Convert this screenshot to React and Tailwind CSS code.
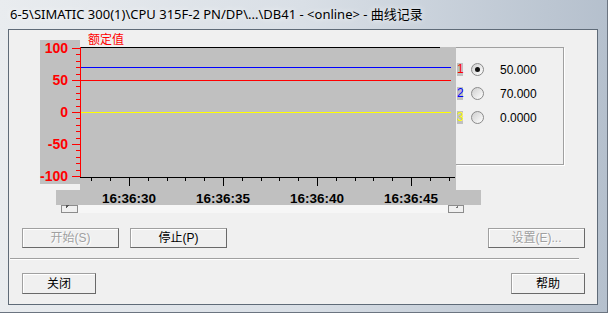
import React from 'react';

const yTicks = [];
for (let v = -100; v <= 100; v += 10) yTicks.push(v);
const xTicks = [];
for (let k = -2; k <= 17; k++) xTicks.push(k);
const xLabels = ['16:36:30', '16:36:35', '16:36:40', '16:36:45'];

function Chart() {
  const row = (v) => Math.round(81 - v * 0.64) + 0.5;
  return (
    <svg width="416" height="182" className="block shrink-0 overflow-visible" shapeRendering="crispEdges">
      <text x="48" y="13" fill="#ff0000" fontSize="12" fontFamily='"Noto Sans CJK SC", sans-serif'>额定值</text>
      {/* panels */}
      <rect x="0" y="9" width="40" height="144" fill="#c0c0c0" />
      <rect x="40" y="16" width="376" height="143" fill="#c0c0c0" />
      <rect x="16" y="159" width="425" height="15" fill="#c0c0c0" />
      {/* scroll track */}
      <rect x="38" y="174" width="370" height="8" fill="#f6f6f6" />
      <rect x="21.5" y="174" width="16" height="7.5" fill="#f0f0f0" stroke="#8c8c8c" />
      <path d="M26 174 L29 174 L26 177 Z" fill="#555" />
      <rect x="408.5" y="174" width="15" height="7.5" fill="#f0f0f0" stroke="#8c8c8c" />
      <path d="M418 174 L418 177 L415 177 Z" fill="#777" />
      {/* traces */}
      <line x1="40" y1="16.5" x2="400" y2="16.5" stroke="#000" />
      <line x1="40" y1="36.5" x2="411" y2="36.5" stroke="#0000ff" />
      <line x1="40" y1="49.5" x2="411" y2="49.5" stroke="#ff0000" />
      <line x1="40" y1="81.5" x2="411" y2="81.5" stroke="#ffff00" />
      {/* y axis */}
      <line x1="40.5" y1="16" x2="40.5" y2="146" stroke="#ff0000" />
      {yTicks.map((v) => (
        <line key={v} x1={v % 50 === 0 ? 32 : 36} y1={row(v)} x2="40" y2={row(v)} stroke="#ff0000" />
      ))}
      {[100, 50, 0, -50, -100].map((v) => (
        <text key={v} x="28" y={row(v) + 4.5} textAnchor="end" fill="#ff0000" fontSize="14" fontWeight="bold" fontFamily='"Liberation Sans", Arial, sans-serif'>
          {v}
        </text>
      ))}
      {/* x axis */}
      <line x1="40" y1="146.5" x2="415" y2="146.5" stroke="#000" />
      {xTicks.map((k) => {
        const x = Math.round(89 + k * 18.8) + 0.5;
        return <line key={k} x1={x} y1="146" x2={x} y2={k % 5 === 0 ? 155 : 150} stroke="#000" />;
      })}
      {xLabels.map((t, i) => (
        <text key={t} x={89 + i * 94} y="172" textAnchor="middle" fill="#000" fontSize="13.5" fontWeight="bold" fontFamily='"Liberation Sans", Arial, sans-serif'>
          {t}
        </text>
      ))}
    </svg>
  );
}

function Radio({ checked }) {
  return (
    <div className="w-[13px] h-[13px] rounded-full border border-[#8a8a8a] bg-linear-to-br from-[#cfcfcf] to-white flex items-center justify-center shrink-0">
      {checked && <div className="w-[5px] h-[5px] rounded-full bg-[#111]" />}
    </div>
  );
}

function Btn({ w, disabled, children }) {
  return (
    <button
      className={`h-full ${w} bg-[#f0f0f0] border border-[#a0a0a0] border-r-[#696969] border-b-[#696969] shadow-[inset_1px_1px_0_#fff] text-[12px] leading-none flex items-center justify-center ${
        disabled ? 'text-[#a0a0a0] [text-shadow:1px_1px_0_#fff]' : 'text-black'
      }`}
    >
      {children}
    </button>
  );
}

const legend = [
  { n: '1', c: 'text-[#ff0000]', v: '50.000', on: true },
  { n: '2', c: 'text-[#0000ff]', v: '70.000' },
  { n: '3', c: 'text-[#ffff00]', v: '0.0000' },
];

export default function App() {
  return (
    <div className="w-[608px] h-[313px] overflow-hidden bg-linear-to-r from-[#e9ecef] via-[#d9dfe6] to-[#b5c0cd] border-r border-b border-[#6b7480] font-['Liberation_Sans','Noto_Sans_CJK_SC',sans-serif]">
      {/* title bar */}
      <div className="h-[29px] pl-[10px] flex items-center text-[13px] text-black font-['Noto_Sans','Noto_Sans_CJK_SC',sans-serif] [text-shadow:0_0_6px_#fff]">
        6-5\SIMATIC 300(1)\CPU 315F-2 PN/DP\...\DB41 - &lt;online&gt; - 曲线记录
      </div>

      {/* client area */}
      <div className="ml-[8px] w-[590px] h-[276px] border border-[#5f6b78] bg-[#f0f0f0] flex flex-col">
        <div className="h-[183px] flex items-start">
          <div className="ml-[31px] mt-[1px]">
            <Chart />
          </div>
          <div className="mt-[17px] w-[108px] h-[118px] border border-l-0 border-[#a0a0a0] shadow-[1px_1px_0_#fff] pt-[15px] flex flex-col gap-[11px]">
            {legend.map((r) => (
              <div key={r.n} className="h-[13px] flex items-center">
                <span className={`w-[6px] h-[13px] bg-[#c0c0c0] text-[12px] leading-[13px] ml-[1px] ${r.c}`}>{r.n}</span>
                <div className="ml-[8px]">
                  <Radio checked={r.on} />
                </div>
                <span className="ml-[16px] text-[12px] leading-none text-black">{r.v}</span>
              </div>
            ))}
          </div>
        </div>

        <div className="mt-[15px] h-[20px] pl-[13px] pr-[12px] flex gap-[11px]">
          <Btn w="w-[97px]" disabled>开始(S)</Btn>
          <Btn w="w-[97px]">停止(P)</Btn>
          <div className="ml-auto h-full">
            <Btn w="w-[97px]" disabled>设置(E)...</Btn>
          </div>
        </div>

        <div className="mt-[10px] ml-[1px] w-[569px] border-t border-[#a0a0a0] border-b border-b-white" />

        <div className="mt-[13px] h-[21px] pl-[13px] pr-[12px] flex justify-between">
          <Btn w="w-[74px]">关闭</Btn>
          <Btn w="w-[74px]">帮助</Btn>
        </div>
      </div>
    </div>
  );
}
